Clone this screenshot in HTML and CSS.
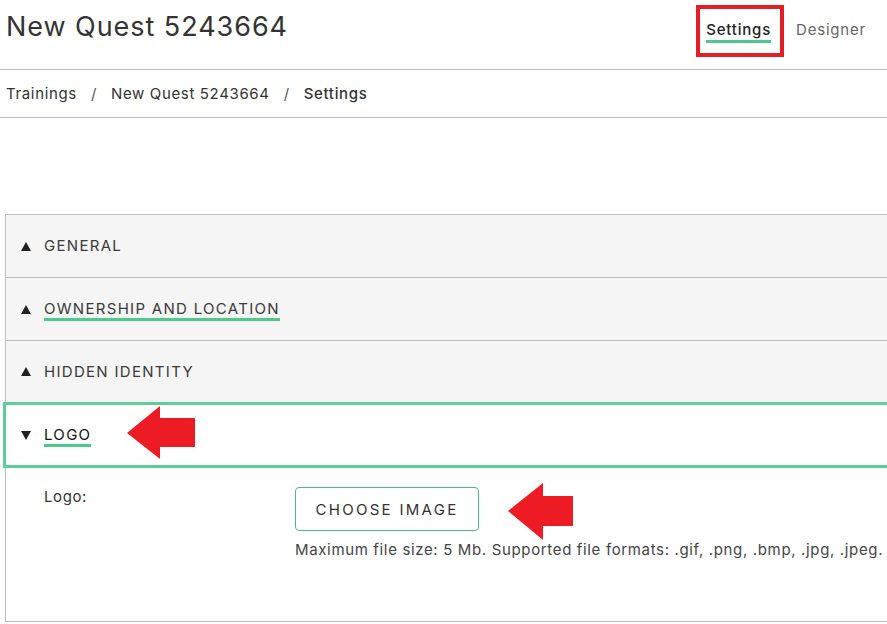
FILE: index.html
```html
<!DOCTYPE html>
<html>
<head>
<meta charset="utf-8">
<link rel="stylesheet" href="styles.css">
</head>
<body>
<header class="topbar">
  <h1 class="title">New Quest 5243664</h1>
  <nav class="tabs">
    <span class="tab tab-active">Settings<span class="annot-box"></span></span>
    <span class="tab">Designer</span>
  </nav>
</header>
<div class="crumbs">
  <span>Trainings</span><span class="sep">/</span><span>New Quest 5243664</span><span class="sep">/</span><span class="crumb-current">Settings</span>
</div>
<main class="page">
  <section class="panel">
    <div class="row">
      <svg class="tri" viewBox="0 0 10 9"><path d="M5 0 L10 9 L0 9 Z"/></svg>
      <span class="row-label">GENERAL</span>
    </div>
    <div class="row">
      <svg class="tri" viewBox="0 0 10 9"><path d="M5 0 L10 9 L0 9 Z"/></svg>
      <span class="row-label underlined">OWNERSHIP AND LOCATION</span>
    </div>
    <div class="row row-last">
      <svg class="tri" viewBox="0 0 10 9"><path d="M5 0 L10 9 L0 9 Z"/></svg>
      <span class="row-label">HIDDEN IDENTITY</span>
    </div>
    <div class="row-open">
      <svg class="tri" viewBox="0 0 10 9"><path d="M0 0 L10 0 L5 9 Z"/></svg>
      <span class="row-label underlined dark">LOGO</span>
      <svg class="arrow arrow-1" viewBox="0 0 68 53"><path d="M0 27 L33 0 L33 12 L68 12 L68 41 L33 41 L33 53 Z"/></svg>
    </div>
    <div class="content">
      <div class="field-label">Logo:</div>
      <div class="field">
        <div class="btn-row">
          <button class="btn">CHOOSE IMAGE</button>
          <svg class="arrow arrow-2" viewBox="0 0 65 57"><path d="M0 28 L35 0 L35 13 L65 13 L65 43 L35 43 L35 57 Z"/></svg>
        </div>
        <p class="help">Maximum file size: 5 Mb. Supported file formats: .gif, .png, .bmp, .jpg, .jpeg.</p>
      </div>
    </div>
  </section>
</main>
</body>
</html>
```
FILE: styles.css
```css
html, body {
  margin: 0;
  padding: 0;
  background: #fff;
  overflow: hidden;
}
body {
  font-family: "Inter", "Open Sans", "Liberation Sans", sans-serif;
  color: #333;
  width: 887px;
  height: 624px;
}
.topbar {
  height: 69px;
  border-bottom: 1px solid #bdbdbd;
  display: flex;
  justify-content: space-between;
  align-items: flex-start;
  padding: 0 21px 0 6px;
}
.title {
  margin: 9px 0 0 0;
  font-size: 27px;
  font-weight: 400;
  letter-spacing: 0.95px;
  color: #333;
  line-height: 36px;
}
.tabs {
  display: flex;
  gap: 25px;
  margin-top: 21px;
}
.tab {
  position: relative;
  font-size: 15px;
  line-height: 17px;
  color: #666;
  letter-spacing: 0.8px;
  padding-bottom: 2px;
}
.tab-active {
  color: #222;
  font-weight: 500;
  border-bottom: 3px solid #4dc98c;
}
.annot-box {
  position: absolute;
  left: -10px;
  top: -16px;
  right: -13px;
  height: 44px;
  border: 4px solid #e31e24;
}
.crumbs {
  height: 47px;
  border-bottom: 1px solid #bdbdbd;
  display: flex;
  align-items: center;
  padding-left: 6px;
  font-size: 15px;
  color: #333;
  letter-spacing: 0.65px;
}
.sep {
  margin: 0 14px;
  color: #555;
}
.crumb-current {
  font-weight: 500;
  color: #333;
}
.page {
  padding-top: 96px;
  padding-left: 5px;
}
.panel {
  border-top: 1px solid #bdbdbd;
  border-left: 1px solid #bdbdbd;
  border-bottom: 1px solid #bdbdbd;
  width: 920px;
}
.row {
  height: 62px;
  border-bottom: 1px solid #bdbdbd;
  background: #f5f5f5;
  display: flex;
  align-items: center;
  padding-left: 15px;
}
.row-last {
  height: 61px;
  border-bottom: none;
}
.tri {
  width: 10px;
  height: 9px;
  fill: #222;
  margin-right: 13px;
  flex: none;
}
.row-label {
  font-size: 15px;
  letter-spacing: 1.3px;
  color: #3a3a3a;
  line-height: 20px;
}
.underlined {
  border-bottom: 3px solid #4dc98c;
  line-height: 18px;
  padding-top: 3px;
}
.dark {
  color: #111;
}
.row-open {
  position: relative;
  height: 66px;
  box-sizing: border-box;
  margin-left: -3px;
  border: 3px solid #5ccf95;
  background: #fff;
  display: flex;
  align-items: center;
  padding-left: 15px;
}
.arrow {
  position: absolute;
  fill: #ed1c24;
}
.arrow-1 {
  left: 121px;
  top: 1px;
  width: 68px;
  height: 53px;
}
.content {
  height: 153px;
  display: flex;
  padding-top: 19px;
  box-sizing: border-box;
}
.field-label {
  width: 251px;
  padding-left: 38px;
  font-size: 15px;
  letter-spacing: 0.6px;
  color: #333;
  padding-top: 0;
  line-height: 20px;
}
.field {
  display: flex;
  flex-direction: column;
}
.btn-row {
  position: relative;
}
.btn {
  width: 184px;
  height: 44px;
  background: #fff;
  border: 1px solid #4fb88a;
  border-radius: 4px;
  font-family: "Inter", "Open Sans", "Liberation Sans", sans-serif;
  font-size: 15px;
  letter-spacing: 2.3px;
  color: #333;
  padding: 0;
}
.arrow-2 {
  left: 213px;
  top: -4px;
  width: 65px;
  height: 57px;
}
.help {
  margin: 9px 0 0 0;
  font-size: 15px;
  letter-spacing: 0.65px;
  color: #444;
  line-height: 20px;
  white-space: nowrap;
}
```
